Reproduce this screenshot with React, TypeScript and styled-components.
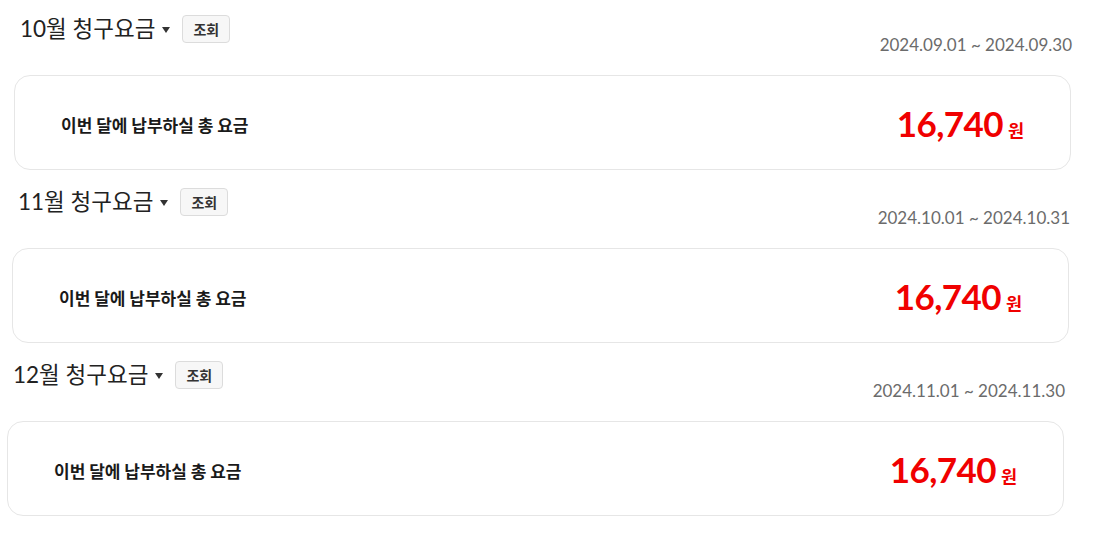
import React from 'react';
import styled, { createGlobalStyle } from 'styled-components';

const GlobalStyle = createGlobalStyle`
  body {
    margin: 0;
    background: #ffffff;
    font-family: 'Lato', 'Noto Sans CJK KR', sans-serif;
    color: #222;
  }
`;

const Page = styled.div`
  padding-top: 15px;
  display: flex;
  flex-direction: column;
`;

const Section = styled.section<{ $offset: number }>`
  width: 1057px;
  margin-left: ${(p) => p.$offset}px;
  margin-bottom: 18px;
  display: flex;
  flex-direction: column;
`;

const Header = styled.div`
  height: 28px;
  display: flex;
  align-items: center;
  padding-left: 6px;
`;

const Title = styled.h2`
  margin: 0;
  font-size: 22.5px;
  font-weight: 400;
  color: #222;
  line-height: 28px;
`;

const Caret = styled.span`
  width: 0;
  height: 0;
  margin-left: 7px;
  margin-top: 1px;
  border-left: 4px solid transparent;
  border-right: 4px solid transparent;
  border-top: 6px solid #333;
`;

const SearchButton = styled.button`
  margin-left: 12px;
  width: 48px;
  height: 28px;
  padding: 0;
  border: 1px solid #dcdcdc;
  border-radius: 4px;
  background: #f7f7f7;
  font-family: 'Noto Sans CJK KR', sans-serif;
  font-size: 14px;
  font-weight: 700;
  color: #333;
`;

const Period = styled.div`
  margin-top: -8px;
  margin-right: -1px;
  text-align: right;
  font-size: 17px;
  line-height: 20px;
  color: #6b6b6b;
`;

const Card = styled.div`
  margin-top: 20px;
  height: 95px;
  box-sizing: border-box;
  border: 1px solid #e6e6e6;
  border-radius: 16px;
  background: #fff;
  display: flex;
  align-items: center;
  justify-content: space-between;
  padding: 0 46px;
`;

const Label = styled.span`
  font-family: 'Noto Sans CJK KR', sans-serif;
  font-size: 17px;
  font-weight: 700;
  color: #1a1a1a;
  padding-top: 3px;
`;

const Amount = styled.div`
  display: flex;
  align-items: baseline;
  gap: 5px;
  color: #f00000;
`;

const Price = styled.span`
  font-size: 35px;
  font-weight: 700;
  letter-spacing: -0.6px;
`;

const Won = styled.span`
  font-family: 'Noto Sans CJK KR', sans-serif;
  font-size: 17.5px;
  font-weight: 700;
`;

const bills = [
  { month: '10월', period: '2024.09.01 ~ 2024.09.30', amount: '16,740', offset: 14 },
  { month: '11월', period: '2024.10.01 ~ 2024.10.31', amount: '16,740', offset: 12 },
  { month: '12월', period: '2024.11.01 ~ 2024.11.30', amount: '16,740', offset: 7 },
];

const App: React.FC = () => {
  return (
    <>
      <GlobalStyle />
      <Page>
        {bills.map((bill) => (
          <Section key={bill.month} $offset={bill.offset}>
            <Header>
              <Title>{bill.month} 청구요금</Title>
              <Caret />
              <SearchButton>조회</SearchButton>
            </Header>
            <Period>{bill.period}</Period>
            <Card>
              <Label>이번 달에 납부하실 총 요금</Label>
              <Amount>
                <Price>{bill.amount}</Price>
                <Won>원</Won>
              </Amount>
            </Card>
          </Section>
        ))}
      </Page>
    </>
  );
};

export default App;
